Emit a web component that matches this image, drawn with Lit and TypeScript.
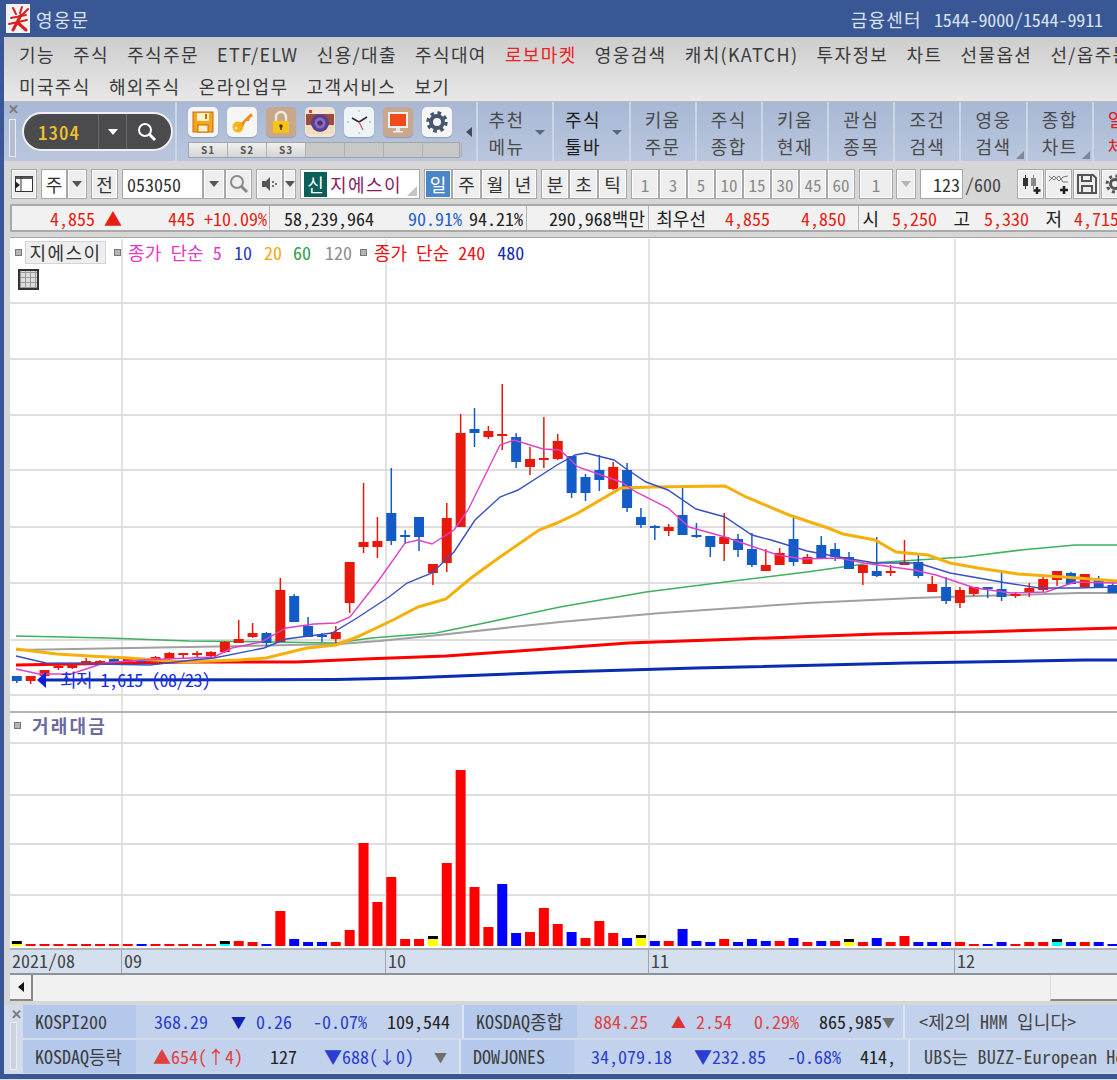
import { LitElement, html, svg, css } from 'lit';
import { customElement } from 'lit/decorators.js';

type Cell = [number, string, string?];

const menu1 = ['기능', '주식', '주식주문', 'ETF/ELW', '신용/대출', '주식대여', '로보마켓', '영웅검색', '캐치(KATCH)', '투자정보', '차트', '선물옵션', '선/옵주문'];
const menu2 = ['미국주식', '해외주식', '온라인업무', '고객서비스', '보기'];

const toolButtons = [
  { a: '추천', b: '메뉴', cls: 'wide arrow' },
  { a: '주식', b: '툴바', cls: 'wide arrow dark' },
  { a: '키움', b: '주문', cls: '' },
  { a: '주식', b: '종합', cls: '' },
  { a: '키움', b: '현재', cls: '' },
  { a: '관심', b: '종목', cls: '' },
  { a: '조건', b: '검색', cls: '' },
  { a: '영웅', b: '검색', cls: 'corner' },
  { a: '종합', b: '차트', cls: 'corner' },
  { a: '일반', b: '체결', cls: 'red' },
];

const infoBoxes: { cls: string; cells: Cell[] }[] = [
  { cls: 'b1', cells: [[110, '4,855 ▲', 'red'], [73, '445', 'red'], [72, '+10.09%', 'red']] },
  { cls: 'b2', cells: [[104, '58,239,964'], [88, '90.91%', 'blue'], [61, '94.21%']] },
  { cls: 'b3', cells: [[118, '290,968백만']] },
  { cls: 'b4', cells: [[57, '최우선'], [64, '4,855', 'red'], [76, '4,850', 'red']] },
  { cls: 'b5', cells: [[20, '시'], [58, '5,250', 'red'], [33, '고'], [59, '5,330', 'red'], [33, '저'], [57, '4,715', 'red']] },
];

const row1: Cell[] = [[72, '368.29', 'idx-blue'], [38, '▼', 'navy tri'], [46, '0.26', 'idx-blue'], [75, '-0.07%', 'idx-blue'], [83, '109,544']];
const row1b: Cell[] = [[71, '884.25', 'idx-red'], [38, '▲', 'idx-tri tri'], [46, '2.54', 'idx-red'], [67, '0.29%', 'idx-red'], [83, '865,985'], [9, '▼', 'grey-tri']];
const row2: Cell[] = [[107, '▲654(↑4)', 'idx-red'], [54, '127'], [117, '▼688(↓0)', 'idx-blue'], [33, '▼', 'grey-tri']];
const row2b: Cell[] = [[98, '34,079.18', 'idx-blue'], [94, '▼232.85', 'idx-blue'], [75, '-0.68%', 'idx-blue'], [55, '414,']];

// c, body top, body bottom, wick top, wick bottom
const candles: [string, number, number, number, number][] = [
  ['b', 676, 681, 676, 683], ['r', 676, 681, 676, 684], ['r', 670, 676, 670, 678], ['r', 666, 668, 664, 670],
  ['r', 663, 668, 663, 669], ['r', 661, 663, 658, 665], ['r', 661, 664, 660, 665], ['b', 659, 662, 657, 664],
  ['r', 659, 663, 658, 664], ['b', 659, 662, 658, 664], ['r', 657, 663, 656, 664], ['r', 653, 659, 652, 660],
  ['r', 653, 655, 653, 658], ['r', 653, 655, 651, 658], ['r', 652, 656, 651, 657], ['r', 642, 652, 641, 653],
  ['r', 639, 643, 620, 643], ['r', 633, 637, 623, 638], ['b', 633, 643, 632, 647], ['r', 590, 642, 578, 642],
  ['b', 596, 622, 594, 622], ['b', 626, 637, 617, 637], ['b', 635, 637, 633, 642], ['r', 632, 639, 626, 643],
  ['r', 562, 603, 562, 613], ['r', 542, 547, 483, 553], ['r', 541, 547, 517, 558], ['b', 513, 541, 468, 545],
  ['b', 535, 537, 530, 544], ['b', 517, 537, 517, 551], ['r', 564, 573, 564, 585], ['r', 518, 563, 503, 572],
  ['r', 433, 527, 414, 527], ['b', 429, 433, 408, 447], ['r', 431, 437, 426, 439], ['r', 434, 436, 384, 450],
  ['b', 437, 462, 433, 468], ['r', 459, 467, 447, 475], ['r', 458, 460, 417, 468], ['r', 441, 459, 434, 460],
  ['b', 456, 493, 456, 498], ['b', 477, 493, 474, 501], ['b', 470, 480, 455, 491], ['r', 467, 489, 462, 490],
  ['b', 470, 508, 463, 512], ['b', 517, 525, 508, 528], ['b', 526, 528, 525, 540], ['r', 527, 531, 524, 536],
  ['b', 515, 535, 488, 535], ['b', 535, 537, 523, 538], ['b', 536, 547, 536, 557], ['r', 537, 544, 513, 561],
  ['b', 539, 550, 534, 557], ['b', 549, 565, 533, 567], ['r', 565, 571, 549, 571], ['r', 553, 565, 548, 565],
  ['b', 539, 562, 515, 566], ['r', 557, 564, 554, 564], ['b', 545, 559, 536, 559], ['b', 549, 557, 543, 561],
  ['b', 557, 569, 552, 569], ['r', 565, 573, 565, 585], ['b', 571, 576, 537, 577], ['r', 571, 573, 565, 576],
  ['r', 562, 565, 540, 565], ['b', 562, 576, 555, 578], ['r', 584, 592, 576, 592], ['b', 587, 601, 577, 604],
  ['r', 590, 603, 587, 608], ['r', 587, 594, 587, 596], ['b', 587, 589, 587, 598], ['b', 589, 597, 573, 601],
  ['r', 594, 596, 592, 598], ['r', 588, 592, 583, 597], ['r', 579, 590, 575, 592], ['r', 571, 580, 571, 586],
  ['b', 573, 584, 572, 584], ['r', 574, 587, 574, 587], ['b', 579, 588, 576, 588], ['b', 585, 593, 583, 593],
];

// bar colour + top edge; y = black cap on yellow, c = black cap on cyan
const volumes: [string, number][] = [
  ['y', 941], ['r', 944], ['r', 944], ['r', 944], ['r', 944], ['r', 944], ['r', 944], ['r', 944], ['r', 944], ['b', 944],
  ['r', 944], ['r', 944], ['r', 944], ['r', 944], ['r', 944], ['c', 941], ['r', 941], ['r', 942], ['b', 944], ['r', 911],
  ['b', 939], ['b', 942], ['b', 942], ['r', 942], ['r', 930], ['r', 843], ['r', 902], ['r', 877], ['r', 939], ['r', 939],
  ['y', 936], ['r', 863], ['r', 770], ['r', 887], ['r', 927], ['b', 884], ['b', 933], ['r', 932], ['r', 908], ['r', 924],
  ['b', 932], ['r', 938], ['r', 921], ['r', 933], ['b', 938], ['y', 935], ['b', 941], ['r', 941], ['b', 929], ['b', 941],
  ['b', 942], ['r', 939], ['b', 942], ['b', 939], ['b', 941], ['r', 941], ['b', 938], ['r', 942], ['b', 941], ['r', 941],
  ['y', 939], ['r', 942], ['b', 938], ['r', 942], ['r', 936], ['b', 942], ['b', 942], ['b', 942], ['r', 942], ['r', 944],
  ['b', 944], ['b', 942], ['r', 944], ['r', 942], ['r', 942], ['c', 939], ['b', 942], ['r', 942], ['b', 942], ['b', 944],
];

const lines: { color: string; w: number; pts: string }[] = [
  { color: '#a0a0a0', w: 2, pts: '16,650 189,647 339,644 379,641 439,635 560,622 661,613 807,603 914,598 1078,593 1117,593' },
  { color: '#3fb060', w: 1.6, pts: '16,636 107,638 189,641 271,642 336,643 371,638 436,633 475,625 560,607 646,592 725,582 807,572 871,563 964,557 1021,550 1075,545 1117,545' },
  { color: '#ff0000', w: 3, pts: '16,665 186,662 296,662 364,659 446,656 560,648 628,643 739,639 878,634 975,632 1117,628' },
  { color: '#0a2db0', w: 3, pts: '40,680 336,679.5 407,678 560,672 696,668 907,663 1085,660 1117,660' },
  { color: '#f5b00c', w: 3, pts: '16,649 57,654 89,656 129,658 182,662 239,660 266,658 307,648 336,645 357,637 393,620 418,607 446,599 471,578 500,557 539,530 557,523 578,513 621,488 653,487 725,486 746,497 789,515 828,528 843,534 875,540 896,552 928,555 950,563 978,568 1018,574 1064,577 1117,581' },
  { color: '#e040c8', w: 1.4, pts: '16,669 39,674 71,674 104,663 143,660 214,657 232,648 261,642 286,628 314,624 336,623 350,617 379,580 405,543 418,540 432,544 454,530 468,510 500,445 514,440 543,449 560,450 578,467 621,482 636,492 668,508 689,527 725,537 757,548 778,555 803,559 839,558 864,563 914,570 936,575 975,588 1011,593 1046,592 1075,582 1117,583' },
  { color: '#3a50c0', w: 1.4, pts: '16,656 46,663 150,665 193,660 214,658 264,648 286,639 332,633 357,618 389,597 407,583 432,573 454,552 475,520 500,497 518,490 557,465 575,455 586,453 614,460 625,468 646,482 668,490 696,509 725,517 752,535 771,540 807,551 839,557 875,563 918,563 950,573 1007,583 1039,588 1075,588 1117,587' },
];

const cx = (i: number) => 16.8 + 13.87 * i;
const gridX = [122, 386, 649, 955];
const gridY = [303, 359, 415, 470, 527, 583, 640, 695, 743, 795, 844, 895];

const icons = [
  svg`<rect x="5" y="5" width="20" height="20" fill="#f7a51c" stroke="#c86a10"/><rect x="9" y="6" width="12" height="8" fill="#fff1c8"/><rect x="10" y="18" width="10" height="7" fill="#fff1c8" stroke="#c86a10"/><rect x="17" y="7" width="2" height="5" fill="#c86a10"/>`,
  svg`<circle cx="11" cy="20" r="5.5" fill="#f7b21c"/><path d="M14 16 L24 6 L26 9 L23 11 L22 14 L19 14 L16 20Z" fill="#f08c1e"/><circle cx="9" cy="21" r="1.5" fill="#ffe9a0"/>`,
  svg`<path d="M10 15 V10 a5 5 0 0 1 10 0 V15" fill="none" stroke="#f2ead8" stroke-width="2.4"/><rect x="7" y="14" width="16" height="12" rx="1" fill="#f9c512"/><circle cx="15" cy="19" r="1.8" fill="#4a3410"/><rect x="14.2" y="19" width="1.6" height="4" fill="#4a3410"/>`,
  svg`<rect x="1" y="7" width="28" height="11" fill="#9c4e3c"/><rect x="1" y="18" width="28" height="9" fill="#f0dcc0"/><circle cx="15" cy="16" r="9" fill="#5a3f8e"/><circle cx="15" cy="16" r="5.5" fill="#8a6cc0"/><circle cx="15" cy="16" r="2.6" fill="#4a3078"/><rect x="4" y="3" width="3" height="3" fill="#e84040"/>`,
  svg`<circle cx="15" cy="4" r="1" fill="#b8c4cc"/><circle cx="15" cy="26" r="1" fill="#b8c4cc"/><circle cx="4" cy="15" r="1" fill="#b8c4cc"/><circle cx="26" cy="15" r="1" fill="#b8c4cc"/><path d="M15 15 L23 10 M15 15 L8 11" stroke="#2e2e2e" stroke-width="1.6" fill="none"/><path d="M15 15 L19 23" stroke="#e05060" stroke-width="1.2" fill="none"/>`,
  svg`<rect x="5" y="5" width="20" height="16" fill="#f0f0f0"/><rect x="7" y="7" width="16" height="12" fill="#f0491a"/><rect x="13" y="21" width="4" height="3" fill="#e4e4e4"/><rect x="10" y="24" width="10" height="1.5" fill="#f0f0f0"/>`,
  svg`<circle cx="15" cy="15" r="6" fill="none" stroke="#46566e" stroke-width="4"/><circle cx="15" cy="15" r="9" fill="none" stroke="#46566e" stroke-width="3.4" stroke-dasharray="3.6 3.5"/>`,
];
const iconBg = ['light', 'light', 'tan', 'cream', 'pale', 'tan', 'light'];

@customElement('app-root')
export class AppRoot extends LitElement {
  static styles = css`
    :host {
      display: block;
      width: 1117px;
      height: 1080px;
      overflow: hidden;
      background: #3a5795;
      font-family: 'Noto Sans CJK KR', 'Noto Sans', sans-serif;
      font-size: 18px;
      font-feature-settings: 'hwid';
      color: #222;
      white-space: nowrap;
      line-height: 1;
    }
    svg { display: block; }

    .title { height: 37px; display: flex; align-items: center; padding: 0 14px 0 6px; color: #dbe3f0; }
    .logo { width: 24px; height: 29px; background: #f4f4f4; margin-right: 6px; }
    .title .name { letter-spacing: 1.2px; flex: 1; }
    .title .phone { letter-spacing: -0.1px; }
    .title .ko { letter-spacing: 1.2px; margin-right: 12px; }

    .window { margin-left: 4px; background: #d6d6d6; }

    .menu { height: 65px; padding-top: 1px; box-sizing: border-box; background: linear-gradient(#cdcdcd, #e8e8e8); border-bottom: 1px solid #bcbcbc; font-feature-settings: normal; }
    .menu-row { height: 32px; display: flex; align-items: center; gap: 18.25px; padding-left: 15px; color: #3a3a3a; letter-spacing: 1.35px; }
    .menu-row .robo { color: #ee2020; }

    .toolbar { height: 59px; display: flex; background: linear-gradient(#a8b8d4, #b9c6dd); }
    .quick { width: 173px; flex: none; position: relative; border-right: 2px solid #ccd5e6; box-sizing: border-box; display: flex; align-items: center; padding-left: 20px; }
    .x { position: absolute; color: #7a7a7a; font-size: 13px; font-weight: 700; font-feature-settings: normal; }
    .quick .x { left: 4px; top: 0; }
    .grip { position: absolute; width: 5px; border: 1px solid #e8ecf4; background: #b4bfd4; }
    .quick .grip { left: 5px; top: 17px; height: 36px; }
    .pill { width: 147px; height: 35px; border-radius: 18px; background: #4b4a4d; box-shadow: 0 0 0 2px #eef0f4; display: flex; align-items: center; color: #f2c02e; font-weight: 500; }
    .pill .code { width: 74px; text-align: center; padding-right: 4px; box-sizing: border-box; font-size: 19px; letter-spacing: 1px; }
    .pill .cell { height: 100%; border-left: 1px solid #6a6a6c; width: 27px; display: flex; align-items: center; justify-content: center; }
    .pill .cell.search { width: 40px; }
    .white-down { width: 0; height: 0; border: 5px solid transparent; border-top: 6px solid #fff; border-bottom: 0; }

    .shortcuts { width: 300.5px; flex: none; border-right: 2px solid #ccd5e6; box-sizing: border-box; padding: 5px 0 0 11px; position: relative; }
    .icons { display: flex; gap: 9px; }
    .ico { width: 30px; height: 30px; border-radius: 5px; box-shadow: 0 1px 1px #8d9cb8; }
    .ico.light { background: #f6f6f6; }
    .ico.tan { background: #c9a78b; }
    .ico.cream { background: #f2e6d2; }
    .ico.pale { background: #eef3f5; }
    .slots { display: flex; width: 272px; height: 16px; margin-top: 5px; background: #c8c8c8; border: 1px solid #a4a4a4; box-sizing: border-box; }
    .slot { width: 39px; flex: none; border-right: 1px solid #b0b0b0; box-sizing: border-box; font-size: 10px; font-weight: 700; color: #555; text-align: center; line-height: 14px; font-feature-settings: normal; letter-spacing: 1px; }
    .slot.on { background: linear-gradient(#f0f0f0, #d4d4d4); }
    .left-tri { position: absolute; right: 4px; top: 25px; width: 0; height: 0; border: 5px solid transparent; border-right: 6px solid #3f4a5c; border-left: 0; }

    .tool { width: 66.2px; flex: none; box-sizing: border-box; border-right: 2px solid #ccd5e6; display: flex; flex-direction: column; align-items: center; justify-content: center; gap: 9px; padding-top: 2px; color: #4a4a4a; letter-spacing: 1.4px; position: relative; }
    .tool.wide { width: 76.5px; align-items: flex-start; padding-left: 11px; }
    .tool.dark { color: #1c1c1c; }
    .tool.red { color: #e02020; border: 0; align-items: flex-start; padding-left: 14px; }
    .tool.arrow::after { content: ''; position: absolute; right: 7px; top: 28px; border: 5px solid transparent; border-top: 5px solid #5b6678; border-bottom: 0; }
    .tool.corner::after { content: ''; position: absolute; right: 2px; bottom: 2px; border-style: solid; border-width: 0 0 8px 8px; border-color: transparent transparent #7d8698 transparent; }

    .controls { height: 43px; padding: 8px 0 5px 7px; box-sizing: border-box; display: flex; gap: 4px; letter-spacing: 0; }
    .grp { display: flex; flex: none; }
    .btn { height: 30px; flex: none; box-sizing: border-box; background: #eeeeee; border: 2px solid #fdfdfd; outline: 1px solid #a8a8a8; outline-offset: -1px; display: flex; align-items: center; justify-content: center; color: #333; }
    .btn.white { background: #fff; }
    .btn.on { background: #4a86c8; color: #fff; }
    .btn.dis { color: #8a8a8a; font-size: 17px; }
    .w13 { width: 13px; } .w20 { width: 20px; } .w22 { width: 22px; } .w26 { width: 26px; } .w27 { width: 27px; }
    .w28 { width: 28px; } .w29 { width: 29px; } .w34 { width: 34px; } .w43 { width: 43px; } .w81 { width: 81px; } .w120 { width: 120px; }
    .left { justify-content: flex-start; padding-left: 3px; }
    .right { justify-content: flex-end; padding-right: 1px; }
    .gap3 { margin-left: 3px; }
    .down { width: 0; height: 0; border: 5px solid transparent; border-top: 6px solid #555; border-bottom: 0; }
    .down.dim { border-top-color: #b4b4b4; }
    .sname { padding: 0 0 0 2px; position: relative; justify-content: flex-start; color: #8c1a5c; letter-spacing: 1.4px; background: #fff; }
    .sname b { width: 23px; height: 25px; background: #0a5f58; color: #fff; font-weight: 400; display: flex; align-items: center; justify-content: center; margin-right: 3px; letter-spacing: 0; }
    .sname::after { content: ''; position: absolute; right: 1px; bottom: 1px; border-style: solid; border-width: 0 0 10px 10px; border-color: transparent transparent #c4c4c4 transparent; }
    .of { width: 54px; flex: none; line-height: 30px; color: #444; padding-left: 2px; box-sizing: border-box; }
    .tail { display: flex; gap: 1px; }

    .info { height: 28px; display: flex; margin-left: 6px; background: #f1f1f1; border: 2px solid #a9a9a9; border-right: 0; box-sizing: border-box; letter-spacing: 0; }
    .box { height: 100%; display: flex; align-items: center; flex: none; border-right: 1px solid #b4b4b4; box-sizing: border-box; }
    .b1 { width: 258px; } .b2 { width: 257px; } .b3 { width: 122px; } .b4 { width: 210px; } .b5 { flex: 1; border: 0; }
    .cell { flex: none; text-align: right; overflow: visible; }
    .red { color: #e81e12; }
    .blue { color: #1f5fd0; }

    .chart { position: relative; margin: 5px 0 0 6px; height: 711px; background: #fff; border-top: 1px solid #a8a8a8; box-sizing: border-box; overflow: hidden; }
    .legend { position: absolute; left: 5px; top: 2px; height: 24px; display: flex; align-items: center; }
    .mark { width: 7px; height: 7px; background: #b4b4b4; border: 1px solid #777; box-sizing: border-box; flex: none; }
    .stock { width: 81px; height: 23px; background: #eeeeee; border: 1px solid #d4d4d4; box-sizing: border-box; margin: 0 8px 0 3px; text-align: center; line-height: 21px; letter-spacing: 1.4px; color: #333; }
    .lg { margin-left: 7px; }
    .lg.o { margin-left: 12px; }
    .c5 { color: #e23ac4; letter-spacing: 0.1px; } .c10 { color: #2438c0; } .c20 { color: #f0a810; } .c60 { color: #2f9e50; } .c120 { color: #8d8d8d; } .c240 { color: #f01010; } .c480 { color: #1428b0; }
    .lg.c10 { margin-left: 12px; } .lg.c60 { margin-left: 11px; } .lg.c120 { margin-left: 14px; }
    .lg.mk { margin-left: 8px; }
    .table-ico { position: absolute; left: 8px; top: 31px; width: 21px; height: 21px; border: 2px solid #333; box-sizing: border-box; background: repeating-linear-gradient(0deg, #999 0 1px, transparent 1px 5px), repeating-linear-gradient(90deg, #999 0 1px, #ddd 1px 5px); }
    .low-tag { position: absolute; left: 50px; top: 431px; color: #1a2ee0; line-height: 20px; letter-spacing: -0.55px; }
    .vol { position: absolute; left: 4px; top: 475px; height: 24px; display: flex; align-items: center; gap: 11px; color: #6a6aa0; font-weight: 700; letter-spacing: 2.2px; }

    .axis { margin: 0 0 0 6px; height: 27px; display: grid; grid-template-columns: 112px 264px 263px 306px 1fr; background: #d5e0ef; border-top: 2px solid #aeb3ba; border-bottom: 2px solid #8e9296; box-sizing: border-box; color: #444; }
    .axis div { border-right: 1px solid #a0a4aa; padding-left: 2px; line-height: 20px; box-sizing: border-box; }
    .axis div:last-child { border: 0; }

    .scroll { margin-left: 6px; height: 26px; display: flex; justify-content: space-between; background: #f1f1f1; }
    .scroll .end { width: 23px; background: #f2f2f2; border-right: 2px solid #888; border-bottom: 2px solid #888; box-sizing: border-box; display: flex; align-items: center; justify-content: center; }
    .scroll .thumb { width: 67px; background: #f2f2f2; border-left: 1px solid #ddd; border-bottom: 2px solid #888; box-sizing: border-box; }
    .black-left { width: 0; height: 0; border: 5px solid transparent; border-right: 6px solid #111; border-left: 0; }

    .bottom { margin-top: 4px; position: relative; height: 69px; padding-left: 19px; background: #d3dbea; box-sizing: border-box; }
    .bottom .x { left: 7px; top: 2px; }
    .bottom .grip { left: 6px; top: 17px; height: 46px; background: #ccd2dc; }
    .trow { display: flex; height: 33px; margin-bottom: 2px; background: #c3d2ec; line-height: 33px; }
    .lbl { width: 113px; flex: none; background: #b3c8ea; padding-left: 12px; box-sizing: border-box; color: #3c3c3c; }
    .sp { width: 12px; flex: none; }
    .sep { width: 2px; flex: none; background: #dde4f0; }
    .news { padding-left: 14px; color: #444; letter-spacing: 0.2px; }
    .idx-blue { color: #2a3ed0; }
    .idx-red { color: #e04040; }
    .idx-tri { color: #e03030; }
    .navy { color: #1020b0; }
    .tri { font-size: 15px; }
    .grey-tri { color: #6e6e6e; font-size: 13px; }
    .strip { height: 2px; margin-top: 5px; background: #dcdcdc; }
  `;

  private cells(list: Cell[]) {
    return list.map(
      ([w, t, c]) => html`<span class="cell ${c ?? ''}" style="width:${w}px">${t}</span>`
    );
  }

  private lens(color: string) {
    return html`<svg width="22" height="22" viewBox="0 0 22 22"><circle cx="9" cy="9" r="6" fill="none" stroke="${color}" stroke-width="2"/><path d="M13.5 13.5 L19 19" stroke="${color}" stroke-width="3"/></svg>`;
  }

  private chart() {
    return html`<svg width="1107" height="710" viewBox="10 238 1107 710">
      ${gridY.map((y) => svg`<line x1="10" x2="1117" y1=${y} y2=${y} stroke="#dedede" stroke-width="2"/>`)}
      ${gridX.map((x) => svg`<line x1=${x} x2=${x} y1="239" y2="948" stroke="#dcdcdc" stroke-width="1.6"/>`)}
      <line x1="10" x2="1117" y1="712" y2="712" stroke="#b4b4b4" stroke-width="2"/>
      ${lines.slice(0, 4).map((l) => svg`<polyline points=${l.pts} fill="none" stroke=${l.color} stroke-width=${l.w}/>`)}
      ${candles.map(([c, t, b, hi, lo], i) => {
        const col = c === 'r' ? '#e8190a' : '#135cc8';
        const x = cx(i);
        return svg`<line x1=${x} x2=${x} y1=${hi} y2=${lo} stroke=${col} stroke-width="1.5"/><rect x=${x - 5} y=${t} width="10" height=${b - t} fill=${col}/>`;
      })}
      ${lines.slice(4).map((l) => svg`<polyline points=${l.pts} fill="none" stroke=${l.color} stroke-width=${l.w}/>`)}
      <polygon points="37,680 46,672 46,688" fill="#0a1ee0"/>
      ${volumes.map(([c, top], i) => {
        const x = cx(i) - 5;
        if (c === 'y' || c === 'c') {
          return svg`<rect x=${x} y=${top} width="10" height="3" fill="#000"/><rect x=${x} y=${top + 3} width="10" height=${946 - top - 3} fill=${c === 'y' ? '#ffff00' : '#00ffff'}/>`;
        }
        return svg`<rect x=${x} y=${top} width="10" height=${946 - top} fill=${c === 'r' ? '#ff0000' : '#0000ff'}/>`;
      })}
    </svg>`;
  }

  render() {
    return html`
      <div class="title">
        <div class="logo">
          <svg width="24" height="29" viewBox="0 0 24 29" fill="none" stroke="#d81e1e" stroke-linecap="round">
            <path d="M7 4 L10 10 M16 3 L14 9 M22 5 L15 12" stroke-width="2"/>
            <path d="M5 14 L20 11 M3 20 L21 16" stroke-width="1.8"/>
            <path d="M15 11 L7 26 M12 19 L20 26" stroke-width="3"/>
          </svg>
        </div>
        <span class="name">영웅문</span>
        <span class="ko">금융센터</span><span class="phone">1544-9000/1544-9911</span>
      </div>
      <div class="window">
        <div class="menu">
          <div class="menu-row">${menu1.map((m) => html`<span class=${m === '로보마켓' ? 'robo' : ''}>${m}</span>`)}</div>
          <div class="menu-row">${menu2.map((m) => html`<span>${m}</span>`)}</div>
        </div>

        <div class="toolbar">
          <div class="quick">
            <span class="x">✕</span><span class="grip"></span>
            <div class="pill">
              <span class="code">1304</span>
              <span class="cell"><i class="white-down"></i></span>
              <span class="cell search">${this.lens('#fff')}</span>
            </div>
          </div>
          <div class="shortcuts">
            <div class="icons">
              ${icons.map((ic, i) => html`<svg class="ico ${iconBg[i]}" viewBox="0 0 30 30">${ic}</svg>`)}
            </div>
            <div class="slots">
              ${['S1', 'S2', 'S3'].map((s) => html`<span class="slot on">${s}</span>`)}
              ${[0, 1, 2, 3].map(() => html`<span class="slot"></span>`)}
            </div>
            <i class="left-tri"></i>
          </div>
          ${toolButtons.map((b) => html`<div class="tool ${b.cls}"><span>${b.a}</span><span>${b.b}</span></div>`)}
        </div>

        <div class="controls">
          <div class="grp">
            <span class="btn w26">
              <svg width="20" height="20" viewBox="0 0 20 20"><rect x="1.5" y="2.5" width="17" height="15" fill="#fff" stroke="#333"/><rect x="1.5" y="2.5" width="17" height="2.5" fill="#555"/><line x1="7" x2="7" y1="3" y2="17" stroke="#333"/><polygon points="1,7 6,11 1,15" fill="#222"/></svg>
            </span>
          </div>
          <div class="grp">
            <span class="btn white w26">주</span><span class="btn w20"><i class="down"></i></span>
          </div>
          <div class="grp"><span class="btn w27">전</span></div>
          <div class="grp">
            <span class="btn white w81 left">053050</span><span class="btn w22"><i class="down"></i></span><span class="btn w27">${this.lens('#8a8a8a')}</span>
          </div>
          <div class="grp">
            <span class="btn w27">
              <svg width="18" height="18" viewBox="0 0 18 18"><polygon points="1,6 5,6 9,2 9,16 5,12 1,12" fill="#555"/><rect x="11" y="6" width="2" height="2" fill="#777"/><rect x="11" y="10" width="2" height="2" fill="#777"/><rect x="14" y="8" width="2" height="2" fill="#777"/></svg>
            </span>
            <span class="btn w13"><i class="down"></i></span>
          </div>
          <div class="grp"><span class="btn w120 sname"><b>신</b>지에스이</span></div>
          <div class="grp">
            <span class="btn w28 on">일</span><span class="btn w29">주</span><span class="btn w28">월</span><span class="btn w28">년</span>
          </div>
          <div class="grp">
            <span class="btn w28">분</span><span class="btn w29">초</span><span class="btn w29">틱</span>
          </div>
          <div class="grp">
            ${['1', '3', '5', '10', '15', '30', '45', '60'].map((n) => html`<span class="btn w28 dis">${n}</span>`)}
          </div>
          <div class="grp">
            <span class="btn w34 dis">1</span><span class="btn w20 gap3"><i class="down dim"></i></span>
          </div>
          <div class="grp">
            <span class="btn white w43 right">123</span><span class="of">/600</span>
            <div class="tail">
              <span class="btn w27">
                <svg width="22" height="22" viewBox="0 0 22 22"><rect x="3" y="5" width="5" height="8" fill="#333"/><line x1="5.5" x2="5.5" y1="2" y2="16" stroke="#333"/><rect x="11" y="5" width="5" height="8" fill="#888"/><line x1="13.5" x2="13.5" y1="2" y2="16" stroke="#888"/><path d="M17 14 v7 M13.5 17.5 h7" stroke="#222" stroke-width="2.4"/></svg>
              </span>
              <span class="btn w27">
                <svg width="22" height="22" viewBox="0 0 22 22" fill="none"><path d="M1 8 L6 3 L11 8 L15 4 L20 3 M1 3 L6 7 L11 3 L15 9 L20 9" stroke="#777"/><path d="M16 13 v8 M12 17 h8" stroke="#222" stroke-width="2.6"/></svg>
              </span>
              <span class="btn w27">
                <svg width="22" height="22" viewBox="0 0 22 22" fill="none" stroke="#555" stroke-width="2"><path d="M2 2 H17 L20 5 V20 H2Z"/><path d="M6 2 V8 H15 V2 M6 20 V13 H16 V20"/></svg>
              </span>
              <span class="btn w27">
                <svg width="22" height="22" viewBox="0 0 22 22" fill="none" stroke="#555"><circle cx="11" cy="11" r="4.5" stroke-width="3"/><circle cx="11" cy="11" r="8" stroke-width="3" stroke-dasharray="3 3.3"/></svg>
              </span>
            </div>
          </div>
        </div>

        <div class="info">
          ${infoBoxes.map((b) => html`<div class="box ${b.cls}">${this.cells(b.cells)}</div>`)}
        </div>

        <div class="chart">
          ${this.chart()}
          <div class="legend">
            <i class="mark"></i><span class="stock">지에스이</span><i class="mark"></i>
            <span class="lg c5">종가 단순 5</span>
            <span class="lg c10">10</span><span class="lg o c20">20</span><span class="lg c60">60</span><span class="lg c120">120</span>
            <i class="mark lg mk"></i>
            <span class="lg c240">종가 단순 240</span><span class="lg o c480">480</span>
          </div>
          <i class="table-ico"></i>
          <span class="low-tag">최저 1,615 (08/23)</span>
          <div class="vol"><i class="mark"></i><span>거래대금</span></div>
        </div>

        <div class="axis">
          <div>2021/08</div><div>09</div><div>10</div><div>11</div><div>12</div>
        </div>
        <div class="scroll">
          <span class="end"><i class="black-left"></i></span>
          <span class="thumb"></span>
        </div>

        <div class="bottom">
          <span class="x">✕</span><span class="grip"></span>
          <div class="trow">
            <span class="lbl">KOSPI200</span>${this.cells(row1)}<span class="sp"></span><span class="sep"></span>
            <span class="lbl">KOSDAQ종합</span>${this.cells(row1b)}<span class="sp"></span><span class="sep"></span>
            <span class="news">&lt;제2의 HMM 입니다&gt;</span>
          </div>
          <div class="trow">
            <span class="lbl">KOSDAQ등락</span>${this.cells(row2)}<span class="sp"></span><span class="sep"></span>
            <span class="lbl">DOWJONES</span>${this.cells(row2b)}<span class="sp"></span><span class="sep"></span>
            <span class="news">UBS는 BUZZ-European Hot</span>
          </div>
        </div>
      </div>
      <div class="strip"></div>
    `;
  }
}
